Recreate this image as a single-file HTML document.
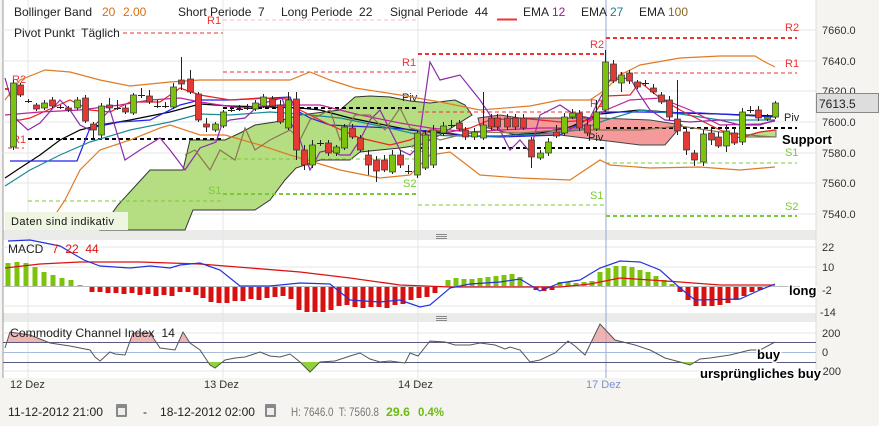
<!DOCTYPE html>
<html><head><meta charset="utf-8"><style>
body{margin:0;width:879px;height:426px;background:#f5f4f1;font-family:"Liberation Sans",sans-serif;overflow:hidden;position:relative}
svg{position:absolute;left:0;top:0}
.t{font-size:12px}
.lab{font-weight:bold;font-size:13px;fill:#000;stroke:#fff;stroke-width:3px;paint-order:stroke}
</style></head><body>
<svg id="s" width="879" height="426" viewBox="0 0 879 426" font-family="Liberation Sans, sans-serif">
<defs>
<clipPath id="cTop"><rect x="0" y="300" width="820" height="42"/></clipPath>
<clipPath id="cBot"><rect x="0" y="362" width="820" height="20"/></clipPath>
</defs>
<rect x="3" y="0" width="813" height="230" fill="#fff"/>
<rect x="3" y="240" width="813" height="73" fill="#fff"/>
<rect x="3" y="322" width="813" height="56" fill="#fff"/>
<rect x="3" y="230" width="813" height="10" fill="#ebebea"/>
<rect x="3" y="313" width="813" height="9" fill="#ebebea"/>
<line x1="3" y1="0" x2="3" y2="378" stroke="#999"/>
<line x1="816" y1="0" x2="816" y2="378" stroke="#ddd"/>
<g stroke="#888" stroke-width="1"><line x1="436" y1="234.5" x2="447" y2="234.5"/><line x1="436" y1="236.5" x2="447" y2="236.5"/><line x1="436" y1="238.5" x2="447" y2="238.5"/><line x1="436" y1="316.5" x2="447" y2="316.5"/><line x1="436" y1="318.5" x2="447" y2="318.5"/><line x1="436" y1="320.5" x2="447" y2="320.5"/></g>
<g stroke="#e6e6e6"><line x1="3" y1="30" x2="816" y2="30"/><line x1="3" y1="61" x2="816" y2="61"/><line x1="3" y1="91" x2="816" y2="91"/><line x1="3" y1="122" x2="816" y2="122"/><line x1="3" y1="153" x2="816" y2="153"/><line x1="3" y1="183" x2="816" y2="183"/><line x1="3" y1="214" x2="816" y2="214"/>
<line x1="28" y1="0" x2="28" y2="378"/><line x1="223" y1="0" x2="223" y2="378"/><line x1="418" y1="0" x2="418" y2="378"/>
<line x1="3" y1="267" x2="816" y2="267"/><line x1="3" y1="247" x2="816" y2="247"/><line x1="3" y1="306" x2="816" y2="306"/><line x1="3" y1="333" x2="816" y2="333"/><line x1="3" y1="371" x2="816" y2="371"/></g>
<line x1="606" y1="0" x2="606" y2="378" stroke="#9aa6d0"/>
<polygon fill="#a8d86c" fill-opacity="0.85" stroke="#333" stroke-width="1" points="100,230 118,205 150,170 183,170 190,140 225,140 240,133 255,125 275,122 300,115 340,110 355,97 370,96 390,97 410,101 430,103 455,100 465,105 472,115 440,135 420,145 400,148 360,152 350,160 320,160 296,168 285,180 270,200 255,210 193,210 185,230"/>
<polygon fill="#f49a9a" stroke="#444" stroke-width="1" points="478,118 500,115 520,118 600,118 650,120 682,125 665,145 640,145 600,140 560,135 520,136 480,126"/>
<polygon fill="#b7e08a" stroke="#666" points="740,137 760,132 776,130 776,137"/>
<g fill="none" stroke-dasharray="4,3">
<g stroke="#e33" stroke-width="1"><line x1="123" y1="33" x2="223" y2="33"/><line x1="223" y1="72" x2="418" y2="72"/><line x1="418" y1="112" x2="606" y2="112"/><line x1="606" y1="73" x2="797" y2="73"/><line x1="8" y1="148" x2="24" y2="148"/><line x1="223" y1="20" x2="418" y2="20" stroke="#f7bcbc"/></g>
<g stroke="#e33" stroke-width="2"><line x1="418" y1="54" x2="606" y2="54"/><line x1="606" y1="38" x2="797" y2="38"/><line x1="5" y1="89" x2="20" y2="89"/></g>
<g stroke="#000" stroke-width="2"><line x1="28" y1="139" x2="223" y2="139"/><line x1="223" y1="108" x2="418" y2="108"/><line x1="418" y1="148" x2="606" y2="148"/><line x1="606" y1="128" x2="797" y2="128"/></g>
<g stroke="#7c3" stroke-width="1"><line x1="28" y1="201" x2="223" y2="201"/><line x1="223" y1="159" x2="418" y2="159"/><line x1="418" y1="205" x2="606" y2="205"/><line x1="606" y1="163" x2="797" y2="163"/></g>
<g stroke="#7c3" stroke-width="2"><line x1="223" y1="194" x2="418" y2="194"/><line x1="606" y1="216" x2="797" y2="216"/></g>
</g>
<g font-size="11"><g fill="#e33"><text x="12" y="83">R2</text><text x="12" y="143">R1</text><text x="207" y="24">R1</text><text x="402" y="66">R1</text><text x="590" y="48">R2</text><text x="590" y="107">R1</text><text x="785" y="31">R2</text><text x="785" y="67">R1</text></g>
<g fill="#7c3"><text x="208" y="194">S1</text><text x="403" y="187">S2</text><text x="410" y="152">S1</text><text x="590" y="199">S1</text><text x="785" y="156">S1</text><text x="785" y="210">S2</text></g>
<g fill="#222"><text x="402" y="101">Piv</text><text x="588" y="141">Piv</text><text x="784" y="121">Piv</text></g></g>
<g fill="none" stroke-width="1.2">
<polyline stroke="#e07b24" points="5,100 20,80 45,70 70,72 100,80 130,86 170,82 200,80 240,80 290,80 310,72 330,80 355,88 400,95 440,102 480,110 530,106 560,100 590,100 605,90 620,75 640,65 680,58 720,56 755,56 765,62 775,67"/>
<polyline stroke="#e07b24" points="45,230 65,200 80,170 100,150 130,140 160,128 170,125 200,135 225,135 260,145 290,155 340,170 380,178 410,175 430,155 450,152 480,175 520,178 570,180 600,160 610,165 650,168 700,167 740,170 775,167"/>
<polyline stroke="#000" points="5,178 20,168 40,155 60,140 80,130 100,125 130,120 170,112 200,104 230,106 270,107 300,108 320,110 350,118 380,124 410,130 440,133 470,136 500,136 540,133 570,127 600,114 640,110 680,113 720,114 775,116"/>
<polyline stroke="#22e" points="10,161 77,161 90,128 100,126 120,122 150,120 180,105 200,100 230,100 290,97 296,110 310,118 330,125 390,128 440,132 470,136 500,137 560,135 600,112 640,112 700,113 775,117"/>
<polyline stroke="#1a8a9a" points="5,186 30,170 60,155 90,142 130,130 170,122 200,114 230,115 270,112 300,114 340,118 380,126 420,135 460,136 500,136 540,134 580,130 606,120 640,110 680,114 720,120 775,120"/>
<polyline stroke="#e22" points="10,120 20,120 30,118 70,100 90,110 110,112 130,102 160,102 180,88 200,95 230,100 260,98 290,99 300,110 330,125 360,138 390,145 410,140 430,130 450,132 470,128 490,120 520,118 560,122 590,120 606,96 630,95 640,82 650,90 660,98 680,110 700,120 720,130 740,138 760,132 775,130"/>
<polyline stroke="#c3219a" points="5,115 40,112 80,110 120,105 150,100 180,98 200,102 240,108 280,105 320,105 360,115 400,123 430,128 470,132 500,130 540,128 580,128 606,110 630,100 660,98 690,110 720,125 760,124 775,121"/>
<polyline stroke="#8e2baa" points="5,78 17,120 28,130 40,123 60,100 70,110 80,125 90,130 100,120 110,110 125,160 140,150 160,138 170,150 185,170 200,148 216,142 222,124 230,120 245,118 260,104 282,98 290,121 300,140 310,170 320,152 330,150 340,155 350,155 360,140 370,120 380,110 400,150 410,155 418,147 430,62 440,80 460,75 480,100 500,130 510,150 520,140 530,152 540,115 560,105 575,115 590,118 598,102 610,80 630,78 640,95 650,110 665,120 690,122 720,120 740,125 760,125 775,120"/>
<polyline stroke="#8a7550" points="185,155 195,150 210,170 220,150 235,160 245,128 255,150 270,140 290,130 300,140 310,120 330,110 340,140 355,115 370,115 385,130 400,108 410,128 418,130 440,140 460,135 480,132 520,133 560,130 600,130 640,130 680,126 720,132 760,136 775,137"/>
</g>
<g id="candles"></g>
<g id="bars"></g>
<line x1="3" y1="286.5" x2="800" y2="286.5" stroke="#bbb"/>
<polyline fill="none" stroke="#dd1111" stroke-width="1.3" points="5,268 40,264 80,262 140,262 200,264 250,268 300,272 350,278 400,285 450,287 500,287 560,287 590,284 620,278 650,280 680,282 720,285 775,285"/>
<polyline fill="none" stroke="#2233dd" stroke-width="1.2" points="8,241 30,240 60,246 84,260 100,266 130,268 150,266 170,268 180,265 200,263 220,270 240,286 270,286 300,283 330,284 350,300 380,302 400,300 420,307 430,305 450,288 470,284 500,282 520,279 540,291 560,283 580,280 600,268 620,261 640,262 660,270 680,288 695,300 740,299 760,290 775,284"/>
<g stroke-width="1"><line x1="3" y1="342.5" x2="816" y2="342.5" stroke="#5a5a80"/><line x1="3" y1="352.5" x2="816" y2="352.5" stroke="#a8bcd6"/><line x1="3" y1="362.5" x2="816" y2="362.5" stroke="#5a5a80"/></g>
<g id="cci"></g>
<g class="t" fill="#222">
<text x="14" y="16">Bollinger Band</text><text x="102" y="16" fill="#d8700f">20</text><text x="123" y="16" fill="#d8700f">2.00</text>
<text x="178" y="16" xml:space="preserve">Short Periode  7</text>
<text x="281" y="16" xml:space="preserve">Long Periode  22</text>
<text x="390" y="16" xml:space="preserve">Signal Periode  44</text>
<text x="523" y="16">EMA</text><text x="552" y="16" fill="#9b1c8a">12</text>
<text x="581" y="16">EMA</text><text x="610" y="16" fill="#17838f">27</text>
<text x="639" y="16">EMA</text><text x="668" y="16" fill="#8a6620">100</text>
<text x="14" y="37" xml:space="preserve">Pivot Punkt  Täglich</text>
</g>
<line x1="497" y1="19.5" x2="517" y2="19.5" stroke="#e33" stroke-width="2"/>
<rect x="5" y="212" width="123" height="18" fill="#eef6e2"/>
<text x="11" y="225" font-size="11" fill="#111" letter-spacing="0.4">Daten sind indikativ</text>
<g font-size="11" fill="#333"><text x="822" y="34">7660.0</text><text x="822" y="65">7640.0</text><text x="822" y="95">7620.0</text><text x="822" y="126">7600.0</text><text x="822" y="157">7580.0</text><text x="822" y="187">7560.0</text><text x="822" y="218">7540.0</text>
<text x="822" y="251">22</text><text x="822" y="271">10</text><text x="822" y="294">-2</text><text x="820" y="316">-14</text>
<text x="822" y="337">200</text><text x="822" y="356">0</text><text x="819" y="375">-200</text></g>
<rect x="816.5" y="93.5" width="62" height="19" fill="#ddd" stroke="#888"/>
<text x="819" y="108" font-size="12" fill="#222">7613.5</text>
<text class="lab" x="782" y="144">Support</text>
<text class="lab" x="789" y="295">long</text>
<text class="lab" x="757" y="359">buy</text>
<text class="lab" x="700" y="378" textLength="121" lengthAdjust="spacingAndGlyphs">ursprüngliches buy</text>
<text x="8" y="253" font-size="12" fill="#222">MACD</text><text x="52" y="253" font-size="12" fill="#d11" xml:space="preserve">7  22  44</text>
<text x="10" y="337" font-size="12" fill="#222" xml:space="preserve" textLength="165" lengthAdjust="spacingAndGlyphs">Commodity Channel Index  14</text>
<g font-size="11" fill="#333"><text x="10" y="388">12 Dez</text><text x="204" y="388">13 Dez</text><text x="398" y="388">14 Dez</text><text x="586" y="388" fill="#7b8fd0">17 Dez</text></g>
<g font-size="12" fill="#222"><text x="8" y="416" textLength="95" lengthAdjust="spacingAndGlyphs">11-12-2012 21:00</text><text x="143" y="416">-</text><text x="160" y="416" textLength="95" lengthAdjust="spacingAndGlyphs">18-12-2012 02:00</text>
<text x="291" y="416" fill="#777" xml:space="preserve" textLength="88" lengthAdjust="spacingAndGlyphs">H: 7646.0  T: 7560.8</text><text x="386" y="416" fill="#6bbb11" font-weight="bold" textLength="24" lengthAdjust="spacingAndGlyphs">29.6</text><text x="418" y="416" fill="#6bbb11" font-weight="bold" textLength="26" lengthAdjust="spacingAndGlyphs">0.4%</text></g>
<g fill="#888"><rect x="116" y="404" width="11" height="13" rx="1"/><rect x="265" y="404" width="11" height="13" rx="1"/></g>
<g fill="#eee"><rect x="118" y="408" width="7" height="7"/><rect x="267" y="408" width="7" height="7"/></g>
</svg>
<script>
var NS="http://www.w3.org/2000/svg";
function el(p,t,a){var e=document.createElementNS(NS,t);for(var k in a)e.setAttribute(k,a[k]);p.appendChild(e);return e;}
var C=[[13,147,83,80,150],[20,85,95,83,97],[28,101,101,99,103],[36,105,109,103,111],[44,108,103,100,110],[52,100,106,97,108],[60,107,107,105,109],[68,108,110,106,112],[77,108,100,97,110],[85,98,121,95,123],[93,124,130,122,140],[101,135,106,103,138],[109,105,108,98,110],[117,108,108,100,110],[125,108,112,105,114],[133,113,95,93,115],[141,95,95,88,98],[149,96,102,90,104],[157,106,106,100,108],[165,106,106,102,108],[173,107,87,83,109],[181,80,84,57,90],[190,79,92,70,94],[198,94,120,92,122],[206,124,127,118,132],[215,130,124,122,132],[223,126,112,110,128],[231,110,110,106,112],[239,109,109,105,111],[247,108,108,104,110],[255,109,103,100,111],[263,106,97,94,108],[272,99,106,96,108],[280,105,122,100,124],[288,128,100,92,130],[296,99,150,92,160],[304,150,165,145,170],[312,165,145,140,168],[320,143,143,140,146],[328,143,153,140,156],[336,153,147,145,156],[344,148,127,124,150],[352,128,137,124,139],[360,138,150,135,152],[368,155,165,150,175],[376,160,171,156,182],[384,160,170,155,172],[392,172,155,150,174],[400,155,165,150,168],[408,171,171,165,174],[417,175,133,130,178],[425,168,135,130,170],[433,165,130,125,168],[443,133,126,122,136],[451,125,125,120,128],[459,123,129,120,131],[465,130,137,127,140],[474,137,132,128,140],[483,138,125,92,140],[491,118,127,114,130],[497,118,127,114,130],[507,118,127,114,130],[515,118,127,114,130],[523,118,128,114,130],[531,140,157,137,168],[540,158,153,150,160],[548,153,142,138,156],[556,132,136,125,138],[564,133,117,113,136],[572,117,113,109,119],[579,113,128,110,131],[587,125,133,120,136],[596,129,112,100,131],[605,110,62,50,112],[613,64,81,60,83],[621,83,75,72,92],[629,73,81,70,84],[637,82,87,80,89],[645,83,83,80,86],[653,88,92,84,94],[661,95,102,92,104],[669,100,117,96,120],[677,119,131,80,135],[686,132,150,128,155],[694,153,160,150,166],[703,162,134,130,166],[711,133,140,128,145],[718,137,146,132,148],[726,146,131,125,152],[734,133,143,128,145],[742,142,112,108,145],[750,110,110,106,113],[758,110,118,106,121],[767,119,117,114,121],[775,117,103,101,119]];
var g=document.getElementById("candles");
C.forEach(function(c){var x=c[0],o=c[1],cl=c[2];var up=cl<o;el(g,"line",{x1:x+0.5,y1:c[3],x2:x+0.5,y2:c[4],stroke:"#222"});var t=Math.min(o,cl),h=Math.abs(o-cl);if(h<1){el(g,"line",{x1:x-3,y1:t+.5,x2:x+4,y2:t+.5,stroke:"#222"});}else el(g,"rect",{x:x-2.5,y:t,width:6,height:h,fill:up?"#7cc30e":"#e43a36",stroke:"#333","stroke-width":0.7});});
var b=document.getElementById("bars");
var B=[[8,263],[17,262],[26,263],[35,267],[44,272],[53,275],[62,278],[71,280],[80,285]];
var R=[[92,292],[100,292],[108,293],[116,293],[124,294],[132,293],[140,295],[148,294],[156,296],[164,295],[172,296],[180,292],[188,292],[196,295],[203,298],[211,302],[219,303],[227,303],[235,301],[243,301],[251,299],[259,300],[267,298],[275,297],[283,296],[291,299],[299,310],[307,312],[315,312],[323,312],[331,310],[339,306],[347,305],[355,307],[363,308],[371,307],[379,307],[387,308],[395,305],[403,304],[411,300],[419,298],[427,297],[435,293]];
var G2=[[448,280],[456,278],[464,279],[472,279],[480,278],[488,277],[496,276],[504,275],[512,274],[520,277],[560,282],[568,282],[576,283],[584,282],[592,281],[600,272],[608,268],[616,266],[624,266],[632,267],[640,270],[648,272],[656,276],[664,280],[672,284]];
var R2=[[536,290],[544,291],[552,290],[680,292],[688,300],[696,306],[704,306],[712,306],[720,305],[728,303],[736,300],[744,296],[752,292],[760,290]];
B.concat(G2).forEach(function(v){el(b,"rect",{x:v[0]-2.5,y:v[1],width:5,height:286-v[1],fill:"#7cc30e"});});
R.concat(R2).forEach(function(v){el(b,"rect",{x:v[0]-2.5,y:287,width:5,height:v[1]-287,fill:"#d81010"});});
var P="5,348 10,332 30,335 50,343 70,346 90,350 95,357 100,361 110,352 115,354 125,355 133,333 150,333 160,348 175,350 183,332 190,343 200,350 210,365 215,368 225,360 235,358 245,357 260,352 270,356 280,357 290,354 300,362 310,372 320,362 335,361 350,356 360,353 370,359 380,362 390,361 405,363 410,353 418,356 430,341 445,342 455,345 470,345 480,343 495,345 505,349 510,347 520,350 530,362 540,360 555,353 568,341 575,346 585,355 600,324 615,340 635,345 650,350 665,358 680,362 690,365 700,359 710,358 730,355 750,350 760,350 775,342";
var cg=document.getElementById("cci");
el(cg,"polygon",{points:P+" 775,342 5,342","fill":"#e89494","fill-opacity":"0.7","clip-path":"url(#cTop)"});
el(cg,"polygon",{points:P+" 775,362 5,362","fill":"#8fd23a","clip-path":"url(#cBot)"});
el(cg,"polyline",{points:P,fill:"none",stroke:"#555","stroke-width":1});
</script>
</body></html>
